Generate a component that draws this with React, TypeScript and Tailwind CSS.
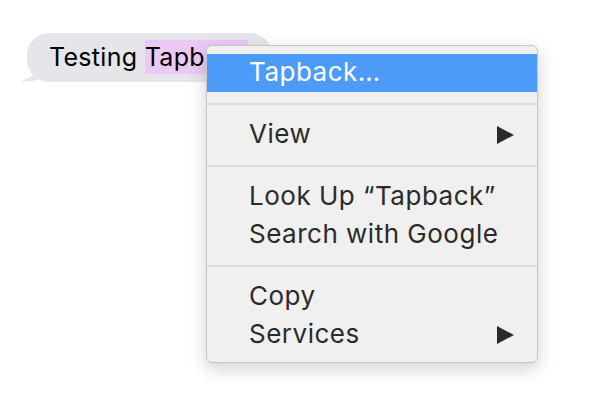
import { useState } from 'react';

type Item = { label: string; submenu?: boolean };

const GROUPS: Item[][] = [
  [{ label: 'Tapback…' }],
  [{ label: 'View', submenu: true }],
  [{ label: 'Look Up “Tapback”' }, { label: 'Search with Google' }],
  [{ label: 'Copy' }, { label: 'Services', submenu: true }],
];

function Arrow() {
  return (
    <svg width="18" height="18" viewBox="0 0 18 18" className="shrink-0">
      <path d="M1 0 L18 9 L1 18 Z" fill="#2b2b2b" />
    </svg>
  );
}

export default function App() {
  const [active, setActive] = useState('Tapback…');

  return (
    <div className="relative w-[598px] h-[398px] bg-white overflow-hidden" style={{ fontFamily: 'Inter, "Noto Sans", sans-serif' }}>
      {/* message bubble */}
      <div className="absolute left-[27px] top-[33px]">
        <div className="relative h-[49px] w-[245px] rounded-[22px] bg-[#e5e5ea] pl-[22px] flex items-center">
          <span className="text-[25px] text-black tracking-[0.3px]">
            Testing <span className="bg-[#ebc9f5] py-[2px]">Tapback</span>
          </span>
        </div>
        <svg className="absolute left-[-6px] bottom-0" width="24" height="20" viewBox="0 0 24 20">
          <path d="M18 0 C18 8 14 15 0 19 C8 20 16 19 24 14 Z" fill="#e5e5ea" />
        </svg>
      </div>

      {/* context menu */}
      <div className="absolute left-[206px] top-[45px] w-[332px] rounded-[6px] bg-[#f0f0f0] border border-[#c6c6c6] shadow-[0_6px_18px_rgba(0,0,0,0.18)] py-[8px]">
        {GROUPS.map((group, gi) => (
          <div key={gi}>
            {gi > 0 && (
              <div className="h-[24px] flex items-center">
                <div className="h-[2px] w-full bg-[#dcdcdc]" />
              </div>
            )}
            {group.map((item) => {
              const on = item.label === active;
              return (
                <div
                  key={item.label}
                  onMouseEnter={() => setActive(item.label)}
                  className={`h-[38px] flex items-center justify-between pl-[42px] pr-[23px] text-[26px] tracking-[0.5px] ${on ? 'bg-[#4d9bf8] text-white' : 'text-[#2b2b2b]'}`}
                >
                  <span className="-mt-[3px]">{item.label}</span>
                  {item.submenu && <Arrow />}
                </div>
              );
            })}
          </div>
        ))}
      </div>
    </div>
  );
}
